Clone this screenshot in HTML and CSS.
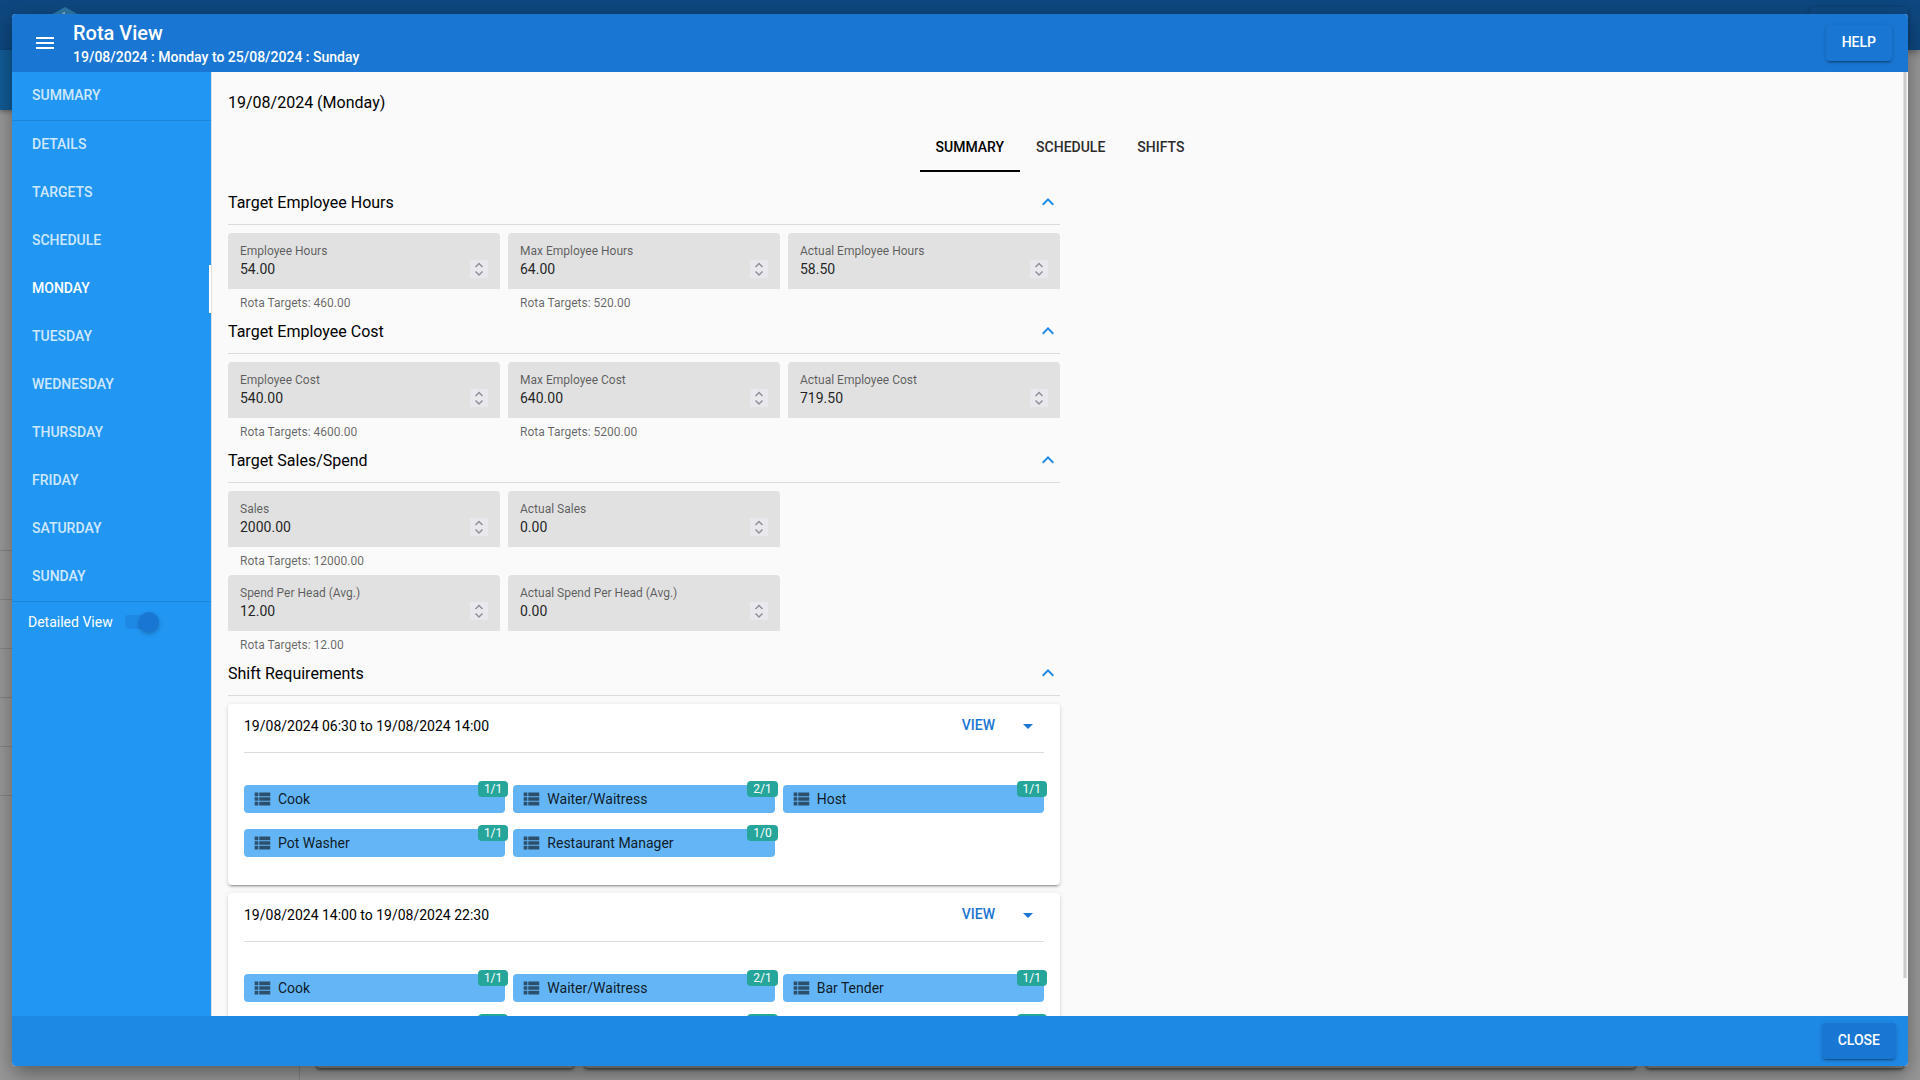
FILE: index.html
```html
<!DOCTYPE html>
<html lang="en">
<head>
<meta charset="utf-8">
<title>Rota View</title>
<link rel="stylesheet" href="styles.css">
</head>
<body>
<div class="backdrop" aria-hidden="true">
  <div class="app-bar">
    <svg class="app-logo" width="36" height="40" viewBox="0 0 36 40"><path fill="#2d78a8" d="M18 0 36 10V30L18 40 0 30V10Z"/><path fill="#9ab0c0" d="M15 6l3-1v8h-2V7z"/></svg>
    <div class="app-action"></div>
  </div>
  <div class="app-main">
    <div class="app-nav">
      <div class="app-nav-head"></div>
      <div class="app-nav-rows"><i></i><i></i><i></i><i></i><i></i><i></i></div>
    </div>
    <div class="app-cards"><div class="app-card"></div><div class="app-card wide"></div><div class="app-card"></div></div>
  </div>
</div>

<div class="dialog" role="dialog" aria-labelledby="dialog-title">
  <header class="dialog-header">
    <button class="icon-button" aria-label="Menu"><svg width="24" height="24" viewBox="0 0 24 24"><path fill="currentColor" d="M3,6H21V8H3V6M3,11H21V13H3V11M3,16H21V18H3V16Z"/></svg></button>
    <div class="dialog-titles">
      <h1 id="dialog-title">Rota View</h1>
      <p>19/08/2024 : Monday to 25/08/2024 : Sunday</p>
    </div>
    <button class="button">HELP</button>
  </header>

  <div class="dialog-body">
    <nav class="sidebar">
      <a href="#summary">SUMMARY</a>
      <hr>
      <a href="#details">DETAILS</a>
      <a href="#targets">TARGETS</a>
      <a href="#schedule">SCHEDULE</a>
      <a href="#monday" class="active">MONDAY</a>
      <a href="#tuesday">TUESDAY</a>
      <a href="#wednesday">WEDNESDAY</a>
      <a href="#thursday">THURSDAY</a>
      <a href="#friday">FRIDAY</a>
      <a href="#saturday">SATURDAY</a>
      <a href="#sunday">SUNDAY</a>
      <hr>
      <label class="switch">Detailed View <input type="checkbox" checked></label>
    </nav>

    <div class="content-wrap">
    <main class="content">
      <h2 class="day">19/08/2024 (Monday)</h2>
      <div class="tabs" role="tablist">
        <button role="tab" aria-selected="true">SUMMARY</button>
        <button role="tab" aria-selected="false">SCHEDULE</button>
        <button role="tab" aria-selected="false">SHIFTS</button>
      </div>

      <div class="sections" id="sections"></div>
    </main>
    <div class="scroll-thumb"></div>
    </div>
  </div>

  <footer class="dialog-footer"><button class="button raised">CLOSE</button></footer>
</div>
<script src="app.js"></script>
</body>
</html>
```
FILE: styles.css
```css
* { box-sizing: border-box; }

body {
  margin: 0;
  height: 100vh;
  overflow: hidden;
  font-family: Roboto, sans-serif;
  font-size: 14px;
  line-height: 20px;
  color: #000;
  background: #999;
}

h1, h2, h3, p { margin: 0; font-weight: 400; }
button { font: inherit; border: 0; padding: 0; background: none; color: inherit; cursor: pointer; }
svg { display: block; flex: none; }

/* Dimmed application behind the dialog */
.backdrop { position: absolute; inset: 0; display: flex; flex-direction: column; }
.app-bar {
  height: 50px;
  flex: none;
  display: flex;
  justify-content: space-between;
  padding: 7px 12px 0 47px;
  background: #0f4880;
  box-shadow: 0 2px 8px rgba(0, 0, 0, .4);
  overflow: hidden;
}
.app-action { width: 98px; height: 36px; border-radius: 4px; box-shadow: 0 1px 4px rgba(0, 0, 0, .3); }
.app-main { flex: 1; display: flex; }
.app-nav { width: 300px; border-right: 1px solid #858585; }
.app-nav-head { height: 60px; background: #125c96; box-shadow: 0 2px 4px rgba(0, 0, 0, .3); }
.app-nav-rows { padding-top: 392px; }
.app-nav-rows i { display: block; height: 49px; border-bottom: 1px solid #858585; }
.app-cards { flex: 1; display: flex; gap: 10px; padding: 0 16px 12px; }
.app-card { width: 258px; border-radius: 4px; background: #8c8c8c; box-shadow: 0 2px 3px rgba(0, 0, 0, .5); }
.app-card.wide { flex: 1; }

/* Dialog */
.dialog {
  position: absolute;
  inset: 14px 12px;
  display: flex;
  flex-direction: column;
  border-radius: 4px;
  overflow: hidden;
  background: #fafafa;
  box-shadow: 0 11px 15px -7px rgba(0, 0, 0, .2), 0 10px 24px 3px rgba(0, 0, 0, .14), 0 4px 20px 3px rgba(0, 0, 0, .12);
}
.dialog-header {
  height: 58px;
  flex: none;
  display: flex;
  align-items: center;
  gap: 16px;
  padding: 0 16px 0 21px;
  color: #fff;
  background: #1976d2;
}
.dialog-titles { flex: 1; }
.dialog-titles h1 { font-size: 20px; line-height: 28px; font-weight: 500; }
.dialog-titles p { font-weight: 500; }
.button {
  height: 36px;
  padding: 0 16px 2px;
  border-radius: 4px;
  color: #fff;
  font-weight: 500;
  background: #1976d2;
  box-shadow: 0 3px 1px -2px rgba(0, 0, 0, .2), 0 2px 2px rgba(0, 0, 0, .14), 0 1px 5px rgba(0, 0, 0, .12);
}
.dialog-footer {
  height: 50px;
  flex: none;
  display: flex;
  align-items: center;
  justify-content: flex-end;
  padding: 0 12px;
  background: #1e88e5;
}
.dialog-body { flex: 1; min-height: 0; display: flex; }

/* Sidebar */
.sidebar { width: 200px; flex: none; background: #2196f3; border-right: 1px solid #e0e0e0; }
.sidebar a {
  display: flex;
  align-items: center;
  height: 48px;
  padding: 0 0 2px 20px;
  font-weight: 500;
  color: rgba(255, 255, 255, .8);
  text-decoration: none;
}
.sidebar a.active { color: #fff; border-right: 2px solid #fff; }
.sidebar hr { margin: 0; border: 0; height: 1px; background: #1e84d6; }
.switch { display: flex; align-items: center; gap: 12px; height: 40px; padding-left: 16px; color: #fff; }
.switch input {
  appearance: none;
  display: flex;
  align-items: center;
  justify-content: flex-end;
  width: 34px;
  height: 20px;
  margin: 0;
  background: linear-gradient(#1e88e5, #1e88e5) left center / 28px 14px no-repeat;
  border-radius: 8px 10px 10px 8px;
}
.switch input::before {
  content: "";
  width: 20px;
  height: 20px;
  border-radius: 50%;
  background: #1976d2;
  box-shadow: 0 2px 4px rgba(0, 0, 0, .25);
}

/* Content */
.content-wrap { flex: 1; min-width: 0; position: relative; }
.content { height: 100%; overflow: auto; scrollbar-width: none; padding: 17px 16px 16px; }
.scroll-thumb { position: absolute; top: 0; right: 1px; width: 4px; height: 96%; background: #ccc; border: solid #e0e0e0; border-width: 0 1px; }
.day { font-size: 16px; line-height: 28px; }
.tabs { display: flex; justify-content: center; margin: 7px 0 16px; }
.tabs button { height: 48px; padding: 0 16px 2px; font-weight: 500; color: #2c2c2c; border-bottom: 2px solid transparent; border-top: 2px solid transparent; }
.tabs button[aria-selected="true"] { color: #000; border-bottom-color: #000; }

.sections { width: 50%; }
.section-head {
  display: flex;
  align-items: center;
  justify-content: space-between;
  height: 37px;
  margin-bottom: 8px;
  padding-bottom: 8px;
  border-bottom: 1px solid #dcdcdc;
}
.section-head h3 { padding-top: 2px; font-size: 16px; line-height: 28px; }
.icon-button { color: #fff; }
.section-head .icon-button { color: #1e88e5; }
.fields { display: grid; grid-template-columns: repeat(3, 1fr); column-gap: 8px; }
.field { height: 84px; }
.field-box {
  display: flex;
  align-items: flex-end;
  height: 56px;
  padding: 0 12px 10px;
  border-radius: 4px 4px 0 0;
  background: #e1e1e1;
}
.field-box svg { margin-bottom: 1px; }
.field-text { flex: 1; min-width: 0; display: flex; flex-direction: column; }
.field label { font-size: 12px; line-height: 16px; color: rgba(0, 0, 0, .6); }
.field input {
  width: 100%;
  height: 20px;
  padding: 0;
  border: 0;
  outline: 0;
  font: inherit;
  color: rgba(0, 0, 0, .87);
  background: none;
  appearance: textfield;
}
.field input::-webkit-inner-spin-button { appearance: none; }
.hint { padding: 6px 12px; font-size: 12px; line-height: 16px; color: rgba(0, 0, 0, .6); }

/* Shift cards */
.shift-card {
  margin-bottom: 8px;
  padding: 0 16px 28px;
  border-radius: 4px;
  background: #fff;
  box-shadow: 0 3px 1px -2px rgba(0, 0, 0, .2), 0 2px 2px rgba(0, 0, 0, .14), 0 1px 5px rgba(0, 0, 0, .12);
}
.shift-head { display: flex; align-items: center; height: 49px; padding: 0 4px 4px 0; border-bottom: 1px solid #dcdcdc; }
.shift-head p { flex: 1; }
.shift-head button { color: #1976d2; font-weight: 500; }
.shift-head .view { padding-bottom: 2px; }
.shift-head .more { margin-left: 21px; }
.chips { display: grid; grid-template-columns: repeat(3, 1fr); gap: 16px 8px; padding-top: 32px; }
.chip {
  position: relative;
  display: flex;
  align-items: center;
  gap: 5px;
  height: 28px;
  padding-left: 7px;
  border-radius: 4px;
  color: rgba(0, 0, 0, .87);
  background: #64b5f6;
}
.chip svg { color: rgba(0, 0, 0, .56); }
.badge {
  position: absolute;
  top: -4px;
  right: -3px;
  height: 16px;
  padding: 0 6px;
  border-radius: 4px;
  font-size: 12px;
  line-height: 16px;
  color: #fff;
  background: #26a69a;
}
```
FILE: app.js
```js
const sections = [
  { title: 'Target Employee Hours', rows: [[
    ['Employee Hours', '54.00', '460.00'],
    ['Max Employee Hours', '64.00', '520.00'],
    ['Actual Employee Hours', '58.50']]] },
  { title: 'Target Employee Cost', rows: [[
    ['Employee Cost', '540.00', '4600.00'],
    ['Max Employee Cost', '640.00', '5200.00'],
    ['Actual Employee Cost', '719.50']]] },
  { title: 'Target Sales/Spend', rows: [
    [['Sales', '2000.00', '12000.00'], ['Actual Sales', '0.00']],
    [['Spend Per Head (Avg.)', '12.00', '12.00'], ['Actual Spend Per Head (Avg.)', '0.00']]] },
];

const shifts = [
  { time: '19/08/2024 06:30 to 19/08/2024 14:00', roles: [
    ['Cook', '1/1'], ['Waiter/Waitress', '2/1'], ['Host', '1/1'],
    ['Pot Washer', '1/1'], ['Restaurant Manager', '1/0']] },
  { time: '19/08/2024 14:00 to 19/08/2024 22:30', roles: [
    ['Cook', '1/1'], ['Waiter/Waitress', '2/1'], ['Bar Tender', '1/1'],
    ['Host', '1/1'], ['Pot Washer', '1/1'], ['Restaurant Manager', '1/1']] },
];

const icon = (size, d) =>
  `<svg width="${size}" height="${size}" viewBox="0 0 24 24"><path fill="currentColor" d="${d}"/></svg>`;
const chevron = icon(24, 'M7.41,15.41L12,10.83L16.59,15.41L18,14L12,8L6,14L7.41,15.41Z');
const caret = icon(24, 'M7,10L12,15L17,10H7Z');
const list = icon(22, 'M9,5V9H21V5M9,19H21V15H9M9,14H21V10H9M4,9H8V5H4M4,19H8V15H4M4,14H8V10H4V14Z');
const spinner = '<svg width="18" height="18" viewBox="0 0 18 18"><rect width="18" height="18" fill="#e9e9ed"/><path d="M5.500 7L9 3.500L12.500 7M5.500 11.500L9 15L12.500 11.500" fill="none" stroke="#8f8f9d" stroke-width="1.500"/></svg>';

const head = title =>
  `<div class="section-head"><h3>${title}</h3><button class="icon-button" aria-label="Collapse ${title}">${chevron}</button></div>`;

const field = ([label, value, target]) => {
  const id = label.toLowerCase().replace(/[^a-z]+/g, '-');
  return `<div class="field"><div class="field-box"><div class="field-text"><label for="${id}">${label}</label>` +
    `<input id="${id}" type="number" step="0.01" value="${value}"></div>${spinner}</div>` +
    (target ? `<p class="hint">Rota Targets: ${target}</p>` : '') + '</div>';
};

const card = ({ time, roles }) =>
  `<article class="shift-card"><div class="shift-head"><p>${time}</p><button class="view">VIEW</button>` +
  `<button class="more" aria-label="More">${caret}</button></div><div class="chips">` +
  roles.map(([name, count]) => `<div class="chip">${list}${name}<span class="badge">${count}</span></div>`).join('') +
  '</div></article>';

document.getElementById('sections').innerHTML =
  sections.map(s => `<section>${head(s.title)}${s.rows.map(r => `<div class="fields">${r.map(field).join('')}</div>`).join('')}</section>`).join('') +
  `<section>${head('Shift Requirements')}${shifts.map(card).join('')}</section>`;
```
